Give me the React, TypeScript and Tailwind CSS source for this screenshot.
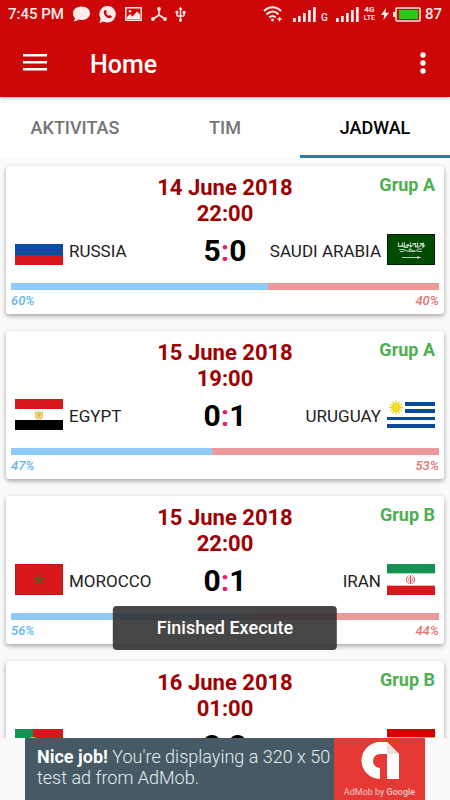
import { useState } from "react";
import type { ReactNode } from "react";
import { MdUsb } from "react-icons/md";

type Team = { name: string; flag: ReactNode; percent: number };

type Match = {
  date: string;
  time: string;
  group: string;
  score: [number, number];
  home: Team;
  away: Team;
};

const FlagBox = ({ label, children }: { label: string; children: ReactNode }) => (
  <svg viewBox="0 0 48 31" className="h-[31px] w-12 shrink-0" role="img" aria-label={label}>
    {children}
  </svg>
);

const Russia = (
  <FlagBox label="Russia">
    <rect width="48" height="31" fill="#fff" />
    <rect y="10" width="48" height="11" fill="#0b4da2" />
    <rect y="21" width="48" height="10" fill="#d8161b" />
  </FlagBox>
);

const SaudiArabia = (
  <FlagBox label="Saudi Arabia">
    <rect width="48" height="31" fill="#001f00" />
    <rect x="1" y="1" width="46" height="29" fill="#004b00" />
    <g fill="none" stroke="#b9cdb9" strokeWidth="1.200">
      <path d="M11.500 8.500v4h4v-4m2 0v5h3l1-3m2-2v5m2-4h3v4m2-5v5m2-4h3v4m1-5v5" />
      <path d="M11 12c2 2 3-2 5 0s3 1 4-1 3 3 5 1 3-2 4 0 4 1 5-1 2 0 4 1" />
      <path d="M12 15.500h5l2 1.500h3l1-2 3 2h4l1-2h4M13 17.500h4m5 0h6m3 0h4" />
      <path d="M15 23.500h19M31 22v3" />
    </g>
  </FlagBox>
);

const Egypt = (
  <FlagBox label="Egypt">
    <rect width="48" height="31" fill="#fff" />
    <rect width="48" height="10" fill="#d8161b" />
    <rect y="21" width="48" height="10" fill="#000" />
    <path
      d="M20.500 12.500l2 1 1.500-1 1.500 1 2-1v6l-2 .5 1 1h-5l1-1-2-.5z"
      fill="#f0dc8a"
      stroke="#d9b83c"
      strokeWidth=".7"
    />
    <path d="M24 14v4M22.500 14.500l1 2.500M25.500 14.500l-1 2.500" stroke="#c9a52b" strokeWidth=".8" />
  </FlagBox>
);

const sunRays = Array.from({ length: 12 }, (_, i) => i * 30);

const Uruguay = (
  <FlagBox label="Uruguay">
    <rect width="48" height="31" fill="#fff" />
    <g fill="#0a4a9a">
      <rect x="18" y="3" width="30" height="4" />
      <rect x="18" y="10" width="30" height="4" />
      <rect y="18" width="48" height="3" />
      <rect y="25" width="48" height="4" />
    </g>
    <g stroke="#f0dc28" strokeWidth="1.300">
      {sunRays.map((angle) => (
        <path key={angle} d="M9 8.500V1.500" transform={`rotate(${angle} 9 8.500)`} />
      ))}
    </g>
    <circle cx="9" cy="8.500" r="4.200" fill="#f2e01c" stroke="#dcc524" strokeWidth=".6" />
  </FlagBox>
);

const Morocco = (
  <FlagBox label="Morocco">
    <rect width="48" height="31" fill="#b81216" />
    <rect x=".7" y=".7" width="46.600" height="29.600" fill="#d9181c" />
    <path
      d="M24 11.300l2.700 8.200-7-5.100h8.600l-7 5.100z"
      fill="none"
      stroke="#5b5a22"
      strokeWidth="1.200"
    />
  </FlagBox>
);

const Iran = (
  <FlagBox label="Iran">
    <rect width="48" height="31" fill="#fff" />
    <rect width="48" height="9" fill="#159251" />
    <path d="M0 9.500h48" stroke="#8ccba9" strokeDasharray="1.500 .5" />
    <path d="M0 21.500h48" stroke="#ec9294" strokeDasharray="1.500 .5" />
    <rect y="22" width="48" height="9" fill="#d8161b" />
    <g fill="none" stroke="#dc5053" strokeWidth="1">
      <path d="M23.500 11v9M21.500 12c-3.500 2-2.500 6.500 1 7.500M25.500 12c3.500 2 2.500 6.500-1 7.500" />
      <path d="M22.500 13c-1.500 2-1 4 .5 5.500M24.500 13c1.500 2 1 4-.5 5.500" strokeWidth=".7" />
    </g>
  </FlagBox>
);

const Portugal = (
  <FlagBox label="Portugal">
    <rect width="48" height="31" fill="#d8161b" />
    <rect width="18" height="31" fill="#159251" />
    <circle cx="18" cy="15" r="7" fill="#e8c93a" />
    <rect x="15" y="11" width="6" height="8" fill="#fff" stroke="#d8161b" />
  </FlagBox>
);

const Spain = (
  <FlagBox label="Spain">
    <rect width="48" height="31" fill="#d40000" />
    <rect y="8" width="48" height="15" fill="#f5b800" />
  </FlagBox>
);

const matches: Match[] = [
  {
    date: "14 June 2018",
    time: "22:00",
    group: "Grup A",
    score: [5, 0],
    home: { name: "RUSSIA", flag: Russia, percent: 60 },
    away: { name: "SAUDI ARABIA", flag: SaudiArabia, percent: 40 },
  },
  {
    date: "15 June 2018",
    time: "19:00",
    group: "Grup A",
    score: [0, 1],
    home: { name: "EGYPT", flag: Egypt, percent: 47 },
    away: { name: "URUGUAY", flag: Uruguay, percent: 53 },
  },
  {
    date: "15 June 2018",
    time: "22:00",
    group: "Grup B",
    score: [0, 1],
    home: { name: "MOROCCO", flag: Morocco, percent: 56 },
    away: { name: "IRAN", flag: Iran, percent: 44 },
  },
  {
    date: "16 June 2018",
    time: "01:00",
    group: "Grup B",
    score: [3, 3],
    home: { name: "PORTUGAL", flag: Portugal, percent: 50 },
    away: { name: "SPAIN", flag: Spain, percent: 50 },
  },
];

const tabs = ["AKTIVITAS", "TIM", "JADWAL"];

const Signal = () => (
  <svg viewBox="0 0 24 15" className="h-[15px] w-6" fill="currentColor" aria-hidden="true">
    <rect x="0" y="11" width="2.700" height="4" />
    <rect x="5" y="9" width="2.700" height="6" />
    <rect x="10" y="6" width="2.700" height="9" />
    <rect x="15" y="3" width="2.700" height="12" />
    <rect x="20" y="0" width="2.700" height="15" />
  </svg>
);

const StatusBar = () => (
  <div className="flex h-7 items-center justify-between px-2 text-[#ffecea]">
    <div className="flex items-center gap-[9px]">
      <span className="text-[15px] font-medium">7:45 PM</span>
      <svg viewBox="0 0 17 16" className="h-4 w-[17px]" fill="currentColor" aria-hidden="true">
        <path d="M8.500 0.500C13.300 0.500 17 3.300 17 7.200S13.300 14 8.500 14c-1 0-2-.1-2.900-.4C4.300 14.700 2.600 15.300.5 15.200c1-.9 1.500-1.900 1.500-3C.7 11 0 9.200 0 7.200 0 3.300 3.700.5 8.500.5z" />
      </svg>
      <svg viewBox="0 0 17 17" className="h-[17px] w-[17px]" aria-hidden="true">
        <path
          d="M8.700 0a8.200 8.200 0 1 1-3.900 15.500L.3 17l1.400-4.300A8.200 8.200 0 0 1 8.700 0z"
          fill="currentColor"
        />
        <path
          d="M5.700 4.200c.4-.4 1-.4 1.300.1l.8 1.600c.1.400-.7 1-.7 1.300.5 1.200 1.400 2 2.600 2.600.4.100.9-1 1.300-.8l1.600.9c.4.200.4.700.1 1.200-.6 1-1.900 1.400-3.100 1C7.200 11.300 5.500 9.600 4.900 7.400c-.3-1.200 0-2.500.8-3.200z"
          fill="#cd0707"
        />
      </svg>
      <svg viewBox="0 0 17 14" className="h-3.5 w-[17px]" fill="none" aria-hidden="true">
        <rect x=".8" y=".8" width="15.400" height="12.400" stroke="currentColor" strokeWidth="1.500" />
        <circle cx="5" cy="4.200" r="1.300" fill="currentColor" />
        <path d="M2 12V10l3-3 2.500 2.500L12 4.500l3 3V12z" fill="currentColor" />
      </svg>
      <svg viewBox="0 0 16 14" className="h-3.5 w-4" fill="currentColor" aria-hidden="true">
        <path d="M8 2v6M8 8l-6 4M8 8l6 4" stroke="currentColor" strokeWidth="1.600" />
        <circle cx="8" cy="2" r="1.900" />
        <circle cx="2" cy="12" r="1.900" />
        <circle cx="14" cy="12" r="1.900" />
      </svg>
      <MdUsb size={17} className="-ml-1" />
    </div>
    <div className="flex items-center">
      <svg
        viewBox="0 0 20 16"
        className="mr-2.5 h-4 w-5"
        fill="none"
        stroke="currentColor"
        strokeWidth="2"
        aria-hidden="true"
      >
        <path d="M1 5c5-5 12-5 17 0M3.500 8.300c4-3.500 8.500-3.500 12 0M6.300 11.400c2-1.800 4.500-1.800 6.400 0" />
        <circle cx="9.500" cy="14" r="1.400" fill="currentColor" stroke="none" />
        <path d="M16.500 11v4.500M14.300 13.200h4.500" strokeWidth="1.300" />
      </svg>
      <Signal />
      <span className="mr-2 ml-1 pt-2 text-[10px] leading-3 font-medium">G</span>
      <Signal />
      <span className="mr-1.5 ml-1 text-center text-[8px] leading-2 font-bold">
        4G
        <br />
        <span className="text-[7px] font-medium">LTE</span>
      </span>
      <svg viewBox="0 0 8 12" className="mr-1 h-3 w-2" fill="currentColor" aria-hidden="true">
        <path d="M5 0L0 7h3.200L2.500 12 8 4.800H4.500z" />
      </svg>
      <svg viewBox="0 0 28 15" className="mr-1 h-[15px] w-7" fill="none" aria-hidden="true">
        <rect x="3" y="1" width="24" height="13" rx="1" stroke="currentColor" strokeWidth="1.500" />
        <rect y="5" width="2.500" height="5" fill="currentColor" />
        <rect x="6" y="3" width="19" height="9" fill="#2bc916" />
      </svg>
      <span className="text-[15px] font-medium">87</span>
    </div>
  </div>
);

const TeamLabel = ({ team, away }: { team: Team; away?: boolean }) => (
  <div className={`flex items-center gap-1.5 ${away ? "flex-row-reverse" : ""}`}>
    {team.flag}
    <span className="pt-1 text-[17px] leading-7 whitespace-nowrap text-[#212121]">{team.name}</span>
  </div>
);

const MatchCard = ({ match }: { match: Match }) => (
  <article className="shrink-0 rounded-[3px] bg-white px-[5px] pt-[9px] pb-1 shadow-[0_2px_5px_rgba(0,0,0,0.35)]">
    <div className="grid grid-cols-[1fr_auto_1fr] px-1">
      <h2 className="col-start-2 text-center text-[22px] leading-[26px] font-bold text-[#a00000]">
        {match.date}
        <br />
        {match.time}
      </h2>
      <span className="text-right text-lg leading-5 font-bold text-[#4caf50]">{match.group}</span>
    </div>
    <div className="mt-1 grid h-9 grid-cols-[1fr_auto_1fr] items-center px-1">
      <TeamLabel team={match.home} />
      <strong className="pt-1 text-[30px] leading-8 font-bold text-black">
        {match.score[0]}
        <span className="text-[#e91e63]">:</span>
        {match.score[1]}
      </strong>
      <TeamLabel team={match.away} away />
    </div>
    <div className="mt-4 flex h-[7px] bg-[#ef9a9a]">
      <div className="bg-[#90caf9]" style={{ width: `${match.home.percent}%` }} />
    </div>
    <div className="flex justify-between pt-[3px] pb-px text-[13px] leading-4 font-medium italic">
      <span className="text-[#64b5ee]">{match.home.percent}%</span>
      <span className="text-[#e57373]">{match.away.percent}%</span>
    </div>
  </article>
);

const AdBanner = () => (
  <footer className="flex shrink-0 justify-center bg-[#fafafa]">
    <a href="#admob" className="flex h-[62px] w-full max-w-[400px] bg-[#455a64]">
      <p className="flex-1 pt-2 pl-3 text-lg leading-[21px] font-light text-[#e6eef0]">
        <b className="font-bold text-white">Nice job!</b> You're displaying a 320 x 50 test ad from
        AdMob.
      </p>
      <div className="flex w-[91px] flex-col items-center bg-[#e53935] pt-1">
        <svg viewBox="0 0 38 38" className="h-[38px] w-[38px]" aria-hidden="true">
          <path
            d="M19 0H26L38 12V37H26V12H19a7 7 0 0 0-7 7 7 7 0 0 0 7 7V37A18.500 18.500 0 0 1 19 0z"
            fill="#fff"
          />
          <path d="M26 12l12 0-12-12z" fill="#f3dddd" />
        </svg>
        <span className="pt-1 text-[9px] leading-4 whitespace-nowrap text-[#f9c5c3]">
          AdMob by <span className="font-medium">Google</span>
        </span>
      </div>
    </a>
  </footer>
);

export default function App() {
  const [activeTab, setActiveTab] = useState("JADWAL");

  return (
    <div className="relative flex h-screen flex-col overflow-hidden bg-[#fafafa] font-[Roboto,sans-serif]">
      <header className="z-10 shrink-0 bg-[#cd0707] shadow-[0_1px_4px_rgba(0,0,0,0.3)]">
        <StatusBar />
        <div className="flex h-[69px] items-center pr-3 pl-[23px] text-white">
          <button type="button" aria-label="Menu">
            <svg viewBox="0 0 24 18" className="h-[18px] w-6" fill="currentColor">
              <rect y="0" width="24" height="2.500" />
              <rect y="7" width="24" height="2.500" />
              <rect y="14" width="24" height="2.500" />
            </svg>
          </button>
          <h1 className="ml-[43px] flex-1 pt-1 text-[25px] leading-8 font-medium">Home</h1>
          <button type="button" aria-label="More options" className="px-3">
            <svg viewBox="0 0 6 22" className="h-[22px] w-1.5" fill="currentColor">
              <circle cx="3" cy="3" r="2.700" />
              <circle cx="3" cy="11" r="2.700" />
              <circle cx="3" cy="19" r="2.700" />
            </svg>
          </button>
        </div>
      </header>

      <div role="tablist" className="flex shrink-0 bg-white">
        {tabs.map((tab) => (
          <button
            key={tab}
            type="button"
            role="tab"
            aria-selected={tab === activeTab}
            onClick={() => setActiveTab(tab)}
            className={`h-[61px] flex-1 border-b-3 pt-1 text-lg font-medium ${
              tab === activeTab ? "border-[#1c7fc0] text-black" : "border-transparent text-[#757575]"
            }`}
          >
            {tab}
          </button>
        ))}
      </div>

      <main className="flex min-h-0 flex-1 flex-col gap-[17px] overflow-hidden px-1.5 pt-2">
        {matches.map((match) => (
          <MatchCard key={match.home.name} match={match} />
        ))}
      </main>

      <AdBanner />

      {/* Toast */}
      <div
        role="status"
        className="absolute bottom-[150px] left-1/2 z-20 -translate-x-1/2 rounded bg-[#323232]/90 px-11 py-2.5 text-lg leading-6 font-medium whitespace-nowrap text-white"
      >
        Finished Execute
      </div>
    </div>
  );
}
